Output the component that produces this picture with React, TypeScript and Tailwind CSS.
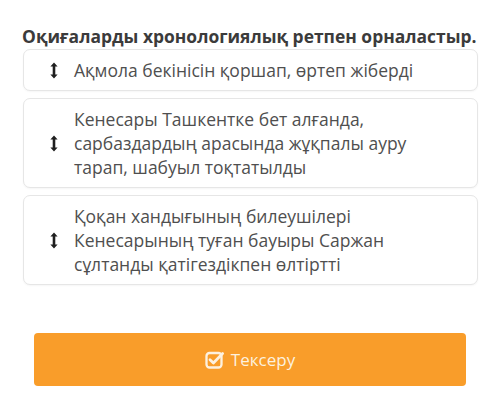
const items = [
  ["Ақмола бекінісін қоршап, өртеп жіберді"],
  [
    "Кенесары Ташкентке бет алғанда,",
    "сарбаздардың арасында жұқпалы ауру",
    "тарап, шабуыл тоқтатылды",
  ],
  [
    "Қоқан хандығының билеушілері",
    "Кенесарының туған бауыры Саржан",
    "сұлтанды қатігездікпен өлтіртті",
  ],
];

function SortIcon() {
  return (
    <svg width="8" height="17" viewBox="0 0 8 17" className="shrink-0" aria-hidden>
      <path d="M4 0.5 L7.6 4.6 H5.3 V12.4 H7.6 L4 16.5 L0.4 12.4 H2.7 V4.6 H0.4 Z" fill="#1f1f1f" />
    </svg>
  );
}

function CheckSquare() {
  return (
    <svg width="20" height="19" viewBox="0 0 20 19" aria-hidden>
      <rect x="1.5" y="3" width="15" height="14.5" rx="3" fill="none" stroke="#fdf1df" strokeWidth="2.3" />
      <path d="M5 9.8 L8.4 13 L17.6 3.6" fill="none" stroke="#fdf1df" strokeWidth="2.8" strokeLinecap="round" strokeLinejoin="round" />
    </svg>
  );
}

export default function App() {
  return (
    <div className="w-[500px] h-[404px] bg-white font-['Open_Sans',sans-serif] overflow-hidden">
      <div className="pt-[24px] px-[22px]">
        <h1 className="text-[17.45px] leading-[24px] font-bold text-[#3b3b3b] whitespace-nowrap">
          Оқиғаларды хронологиялық ретпен орналастыр.
        </h1>
        <ul className="mt-[1px] flex flex-col gap-[7px] ml-[1px] w-[455px]">
          {items.map((lines, i) => (
            <li
              key={i}
              className="flex items-center gap-[16px] rounded-[7px] border border-[#e6e6e6] bg-white pl-[26px] pr-3 py-[8px] shadow-[0_1px_2px_rgba(0,0,0,0.04)]"
            >
              <SortIcon />
              <p className="text-[17.5px] leading-[24px] text-[#4f4f4f]">
                {lines.map((l, j) => (
                  <span key={j} className="block whitespace-nowrap">
                    {l}
                  </span>
                ))}
              </p>
            </li>
          ))}
        </ul>
        <div className="mt-[48px] px-[12px]">
          <button
            type="button"
            className="w-[432px] h-[53px] rounded-[4px] bg-[#f99d2a] flex items-center justify-center gap-[6px] text-[17px] text-[#fdf1df]"
          >
            <CheckSquare />
            <span>Тексеру</span>
          </button>
        </div>
      </div>
    </div>
  );
}
